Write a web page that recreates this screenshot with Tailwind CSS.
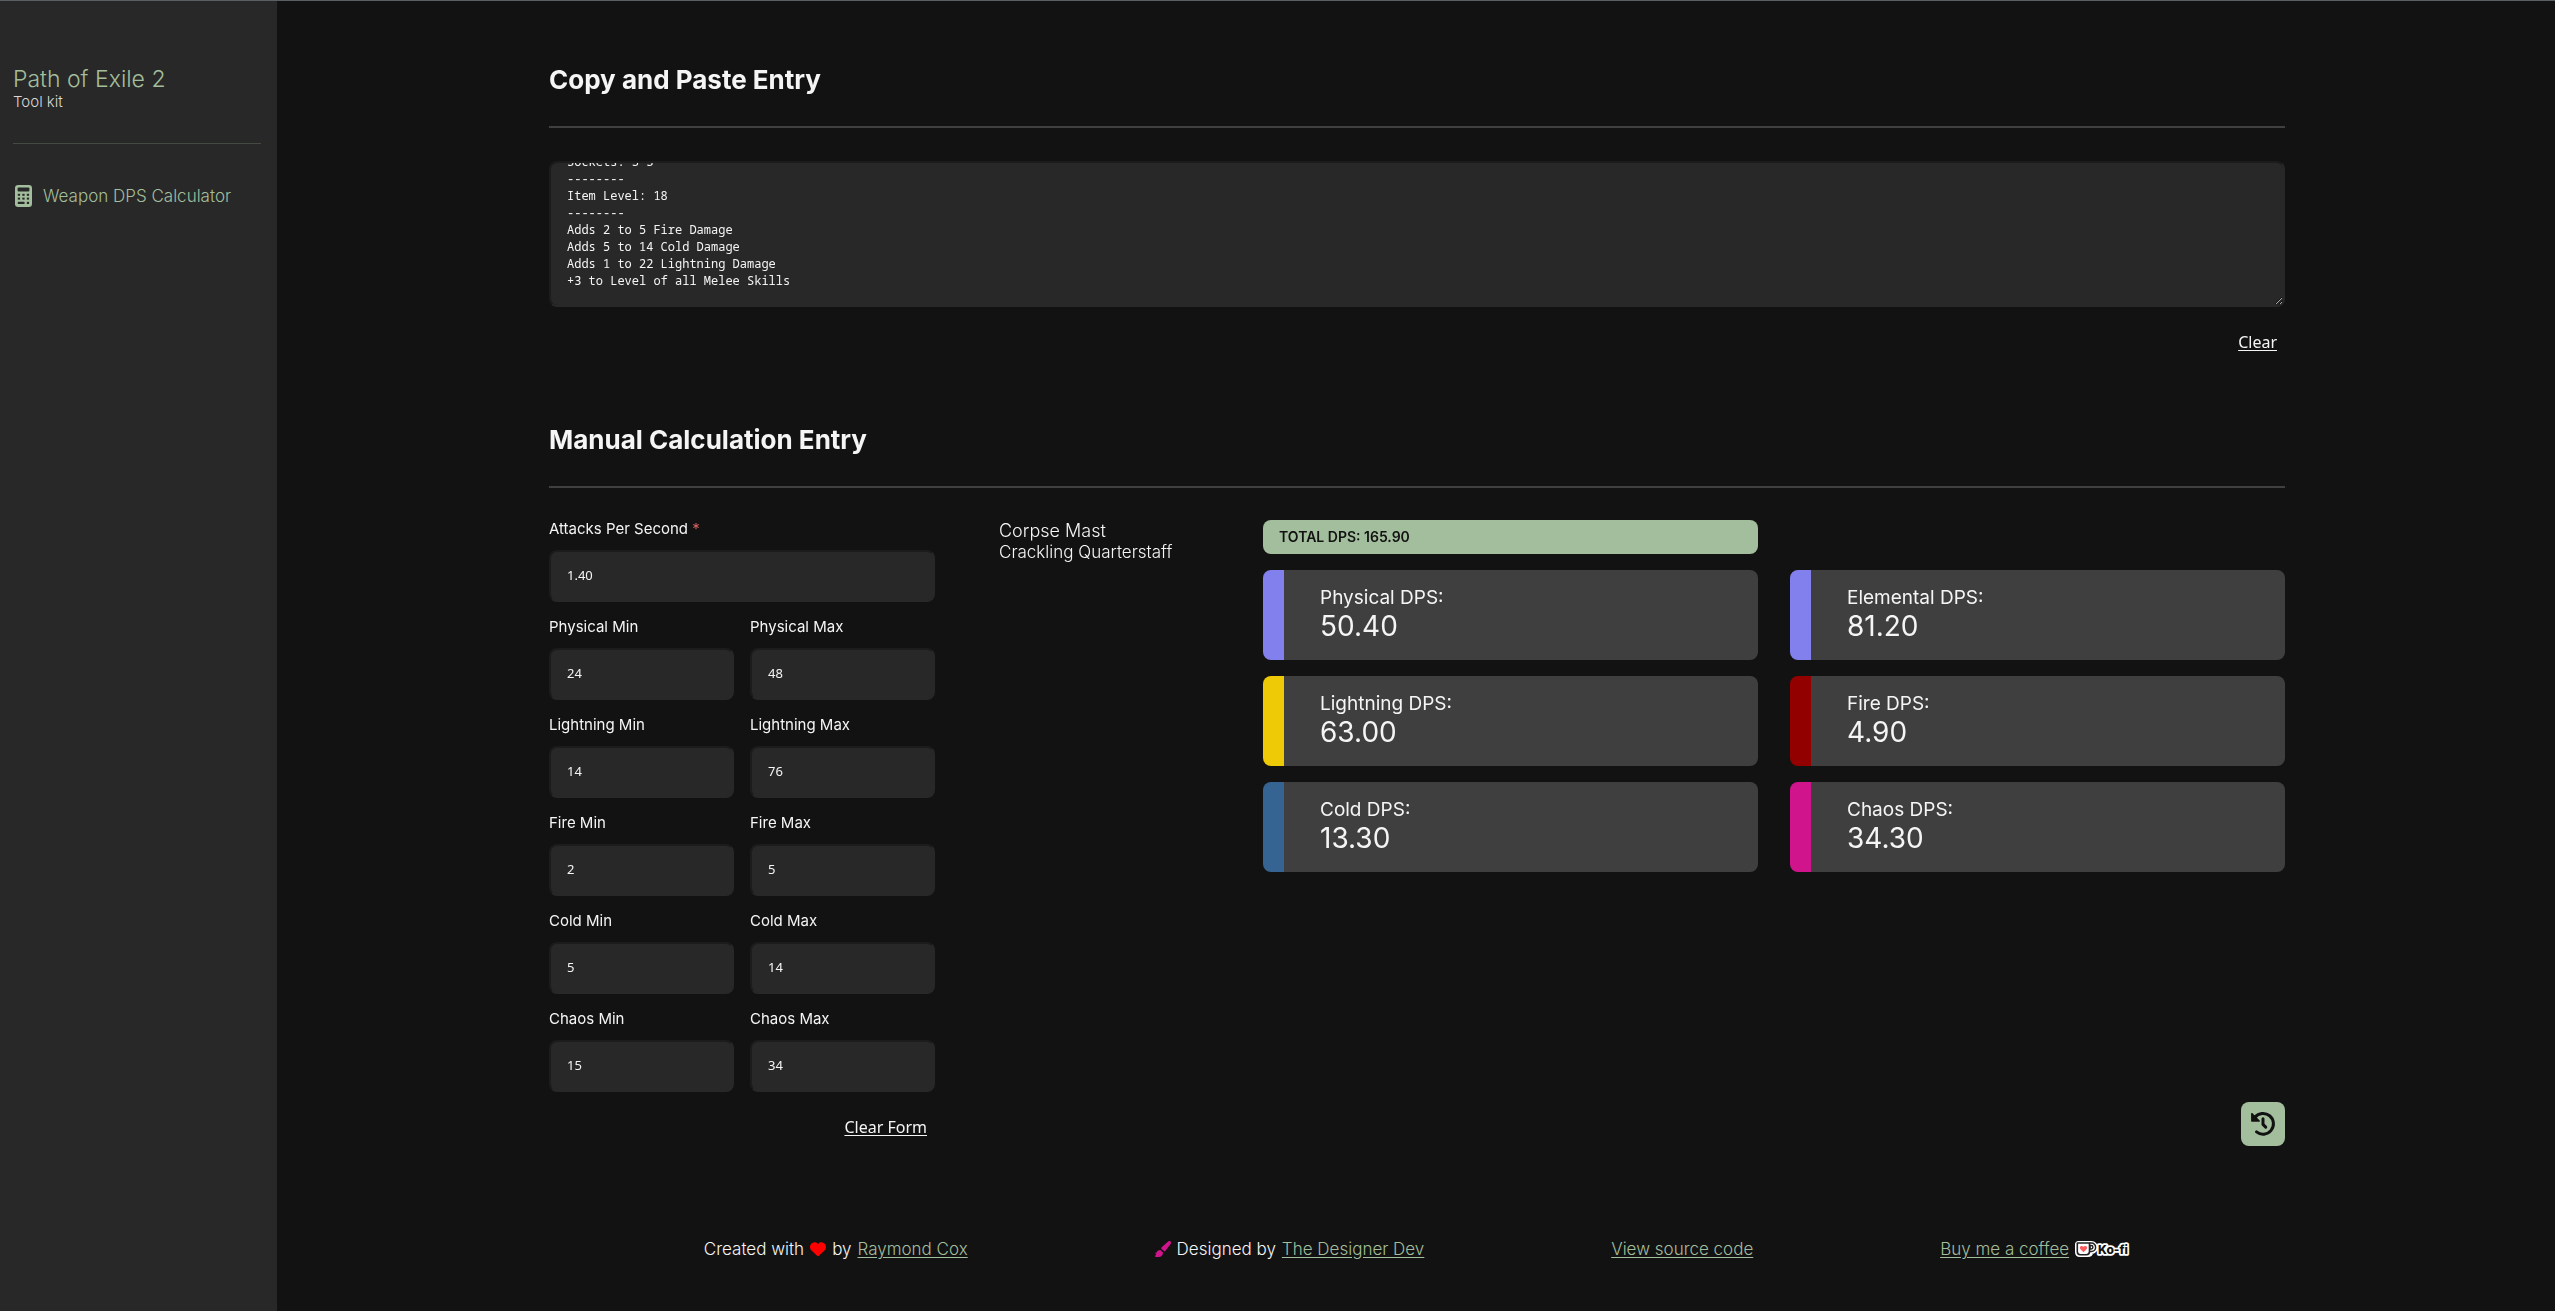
<!DOCTYPE html>
<html lang="en">
<head>
<meta charset="utf-8">
<meta name="viewport" content="width=device-width, initial-scale=1">
<title>Path of Exile 2 Tool kit</title>
<script src="https://cdn.jsdelivr.net/npm/@tailwindcss/browser@4"></script>
</head>
<body class="flex min-h-screen gap-0.5 border-t border-[#5a5f63] bg-[#121212] font-['Inter',sans-serif] text-[#f5f5f5]">

<aside class="w-[277px] shrink-0 bg-[#282828] px-[13px] pt-16 font-light">
  <a href="#" class="block text-[23px] leading-7 text-[#a3be9c]">Path of Exile 2</a>
  <p class="text-[15px] leading-[18px] text-[#d8d8d8]">Tool kit</p>
  <hr class="mt-8 mr-[3px] border-[#434b40]">
  <nav class="mt-10">
    <a href="#" class="flex items-center gap-[11px] text-[17px] leading-6 text-[#a3be9c]">
      <svg class="ml-0.5 h-[22px] w-[17px]" viewBox="0 0 17 22" aria-hidden="true">
        <rect width="17" height="22" rx="3.2" fill="#a3be9c"/>
        <g fill="#282828">
          <rect x="2.6" y="2.6" width="11.8" height="4" rx="1"/>
          <rect x="2.8" y="8.8" width="2.3" height="2"/><rect x="7.3" y="8.8" width="2.3" height="2"/><rect x="11.8" y="8.8" width="2.3" height="2"/>
          <rect x="2.8" y="12.6" width="2.3" height="2"/><rect x="7.3" y="12.6" width="2.3" height="2"/><rect x="11.8" y="12.6" width="2.3" height="2"/>
          <rect x="2.8" y="16.8" width="6.8" height="2.2" rx=".6"/><rect x="11.8" y="16.8" width="2.3" height="2.2"/>
        </g>
      </svg>
      Weapon DPS Calculator
    </a>
  </nav>
</aside>

<div class="mx-auto flex w-full max-w-[1800px] flex-col pt-[63px]">
<main class="px-8">
  <section>
    <h2 class="text-[26px] leading-8 font-bold"><label for="paste">Copy and Paste Entry</label></h2>
    <hr class="mt-[30px] border-t-2 border-[#404040]">
    <textarea id="paste" class="mt-[33px] block h-[146px] w-full rounded-lg border-2 border-t-[#1c1c1c] border-r-[#282828] border-b-[#282828] border-l-[#1c1c1c] bg-[#282828] p-4 font-['Noto_Sans_Mono','DejaVu_Sans_Mono',monospace] text-xs leading-[17px] [scrollbar-width:none]">Item Class: Quarterstaves
Rarity: Rare
Corpse Mast
Crackling Quarterstaff
--------
Sockets: S S
--------
Item Level: 18
--------
Adds 2 to 5 Fire Damage
Adds 5 to 14 Cold Damage
Adds 1 to 22 Lightning Damage
+3 to Level of all Melee Skills</textarea>
    <div class="mt-[23px] flex justify-end px-2">
      <button type="button" class="font-['Noto_Sans',sans-serif] leading-6 underline underline-offset-2">Clear</button>
    </div>
  </section>

  <section class="mt-[70px]">
    <h2 class="text-[26px] leading-8 font-bold">Manual Calculation Entry</h2>
    <hr class="mt-[30px] border-t-2 border-[#404040]">
    <div class="mt-8 flex">
      <form class="w-[386px] shrink-0">
        <div class="grid grid-cols-2 gap-4 text-[15px] leading-[18px]">
          <div class="col-span-2">
            <label for="aps">Attacks Per Second <span class="text-[#d9605f]">*</span></label>
            <input id="aps" value="1.40" class="mt-3 block h-[52px] w-full rounded-lg border-2 border-t-[#1c1c1c] border-r-[#282828] border-b-[#282828] border-l-[#1c1c1c] bg-[#282828] px-4 pb-0.5 font-['Noto_Sans',sans-serif] text-[13px]">
          </div>
          <div>
            <label for="pmin">Physical Min</label>
            <input id="pmin" value="24" class="mt-3 block h-[52px] w-full rounded-lg border-2 border-t-[#1c1c1c] border-r-[#282828] border-b-[#282828] border-l-[#1c1c1c] bg-[#282828] px-4 pb-0.5 font-['Noto_Sans',sans-serif] text-[13px]">
          </div>
          <div>
            <label for="pmax">Physical Max</label>
            <input id="pmax" value="48" class="mt-3 block h-[52px] w-full rounded-lg border-2 border-t-[#1c1c1c] border-r-[#282828] border-b-[#282828] border-l-[#1c1c1c] bg-[#282828] px-4 pb-0.5 font-['Noto_Sans',sans-serif] text-[13px]">
          </div>
          <div>
            <label for="lmin">Lightning Min</label>
            <input id="lmin" value="14" class="mt-3 block h-[52px] w-full rounded-lg border-2 border-t-[#1c1c1c] border-r-[#282828] border-b-[#282828] border-l-[#1c1c1c] bg-[#282828] px-4 pb-0.5 font-['Noto_Sans',sans-serif] text-[13px]">
          </div>
          <div>
            <label for="lmax">Lightning Max</label>
            <input id="lmax" value="76" class="mt-3 block h-[52px] w-full rounded-lg border-2 border-t-[#1c1c1c] border-r-[#282828] border-b-[#282828] border-l-[#1c1c1c] bg-[#282828] px-4 pb-0.5 font-['Noto_Sans',sans-serif] text-[13px]">
          </div>
          <div>
            <label for="fmin">Fire Min</label>
            <input id="fmin" value="2" class="mt-3 block h-[52px] w-full rounded-lg border-2 border-t-[#1c1c1c] border-r-[#282828] border-b-[#282828] border-l-[#1c1c1c] bg-[#282828] px-4 pb-0.5 font-['Noto_Sans',sans-serif] text-[13px]">
          </div>
          <div>
            <label for="fmax">Fire Max</label>
            <input id="fmax" value="5" class="mt-3 block h-[52px] w-full rounded-lg border-2 border-t-[#1c1c1c] border-r-[#282828] border-b-[#282828] border-l-[#1c1c1c] bg-[#282828] px-4 pb-0.5 font-['Noto_Sans',sans-serif] text-[13px]">
          </div>
          <div>
            <label for="cmin">Cold Min</label>
            <input id="cmin" value="5" class="mt-3 block h-[52px] w-full rounded-lg border-2 border-t-[#1c1c1c] border-r-[#282828] border-b-[#282828] border-l-[#1c1c1c] bg-[#282828] px-4 pb-0.5 font-['Noto_Sans',sans-serif] text-[13px]">
          </div>
          <div>
            <label for="cmax">Cold Max</label>
            <input id="cmax" value="14" class="mt-3 block h-[52px] w-full rounded-lg border-2 border-t-[#1c1c1c] border-r-[#282828] border-b-[#282828] border-l-[#1c1c1c] bg-[#282828] px-4 pb-0.5 font-['Noto_Sans',sans-serif] text-[13px]">
          </div>
          <div>
            <label for="hmin">Chaos Min</label>
            <input id="hmin" value="15" class="mt-3 block h-[52px] w-full rounded-lg border-2 border-t-[#1c1c1c] border-r-[#282828] border-b-[#282828] border-l-[#1c1c1c] bg-[#282828] px-4 pb-0.5 font-['Noto_Sans',sans-serif] text-[13px]">
          </div>
          <div>
            <label for="hmax">Chaos Max</label>
            <input id="hmax" value="34" class="mt-3 block h-[52px] w-full rounded-lg border-2 border-t-[#1c1c1c] border-r-[#282828] border-b-[#282828] border-l-[#1c1c1c] bg-[#282828] px-4 pb-0.5 font-['Noto_Sans',sans-serif] text-[13px]">
          </div>
        </div>
        <div class="mt-[23px] flex justify-end px-2 pb-[7px]">
          <button type="reset" class="font-['Noto_Sans',sans-serif] leading-6 underline underline-offset-2">Clear Form</button>
        </div>
      </form>

      <div class="ml-16 w-[264px] shrink-0 font-light">
        <p class="text-lg leading-[22px]">Corpse Mast</p>
        <p class="text-[17px] leading-5">Crackling Quarterstaff</p>
      </div>

      <div class="flex grow flex-col justify-between">
        <div class="grid grid-cols-2 gap-x-8 gap-y-4">
          <p class="col-start-1 rounded-lg bg-[#a3be9c] px-4 text-sm leading-[34px] font-semibold text-[#121212]">TOTAL DPS: 165.90</p>
          <div class="col-start-1 flex h-[90px] flex-col justify-center rounded-lg bg-gradient-to-r from-[#8280ec] from-[21px] to-[#3f3f3f] to-[21px] pb-0.5 pl-[57px] text-[19px] leading-6"><p>Physical DPS:</p><p class="text-[28px] leading-8">50.40</p></div>
          <div class="flex h-[90px] flex-col justify-center rounded-lg bg-gradient-to-r from-[#8280ec] from-[21px] to-[#3f3f3f] to-[21px] pb-0.5 pl-[57px] text-[19px] leading-6"><p>Elemental DPS:</p><p class="text-[28px] leading-8">81.20</p></div>
          <div class="flex h-[90px] flex-col justify-center rounded-lg bg-gradient-to-r from-[#eeca06] from-[21px] to-[#3f3f3f] to-[21px] pb-0.5 pl-[57px] text-[19px] leading-6"><p>Lightning DPS:</p><p class="text-[28px] leading-8">63.00</p></div>
          <div class="flex h-[90px] flex-col justify-center rounded-lg bg-gradient-to-r from-[#920000] from-[21px] to-[#3f3f3f] to-[21px] pb-0.5 pl-[57px] text-[19px] leading-6"><p>Fire DPS:</p><p class="text-[28px] leading-8">4.90</p></div>
          <div class="flex h-[90px] flex-col justify-center rounded-lg bg-gradient-to-r from-[#366492] from-[21px] to-[#3f3f3f] to-[21px] pb-0.5 pl-[57px] text-[19px] leading-6"><p>Cold DPS:</p><p class="text-[28px] leading-8">13.30</p></div>
          <div class="flex h-[90px] flex-col justify-center rounded-lg bg-gradient-to-r from-[#d0158c] from-[21px] to-[#3f3f3f] to-[21px] pb-0.5 pl-[57px] text-[19px] leading-6"><p>Chaos DPS:</p><p class="text-[28px] leading-8">34.30</p></div>
        </div>
        <button type="button" aria-label="History" class="size-11 self-end rounded-lg bg-[#a3be9c] text-[#121212]">
          <svg viewBox="0 0 44 44" fill="none" stroke="currentColor" stroke-width="3" stroke-linecap="round" stroke-linejoin="round" aria-hidden="true">
            <path d="M14 15.2a10.4 10.4 0 1 1 1.5 14.7"/>
            <path d="M22 16.8v5.6l2.7 2.7"/>
            <path d="M10.8 11.6l7.4 7.4h-7.4z" fill="currentColor" stroke-width="1.4"/>
          </svg>
        </button>
      </div>
    </div>
  </section>
</main>

<footer class="mt-[91px] flex justify-evenly pb-8 text-[17px] leading-6 font-light">
  <p class="flex items-center gap-1.5">Created with
    <svg class="size-4" viewBox="0 0 512 512" fill="#ff0000" role="img" aria-label="love"><path d="M47.6 300.4L228.3 469.1c7.5 7 17.4 10.9 27.7 10.9s20.2-3.9 27.7-10.9L464.4 300.4c30.4-28.3 47.6-68 47.6-109.5v-5.8c0-69.9-50.5-129.5-119.4-141C347 36.5 300.6 51.4 268 84L256 96 244 84c-32.6-32.6-79-47.5-124.6-39.9C50.5 55.6 0 115.2 0 185.1v5.8c0 41.5 17.2 81.2 47.6 109.5z"/></svg>
    by <a href="#" class="text-[#a3be9c] underline underline-offset-2">Raymond Cox</a></p>
  <p class="flex items-center gap-1.5">
    <svg class="size-4" viewBox="0 0 16 16" fill="#d0158c" aria-hidden="true"><path d="M15.5.5c.7.7.6 1.700.1 2.400L10.900 9.300c-.4.5-.9.900-1.500 1.200L6.100 7.400c.2-.6.600-1.100 1.100-1.600L13.200.500c.7-.6 1.700-.6 2.300 0z"/><path d="M5.300 8.900L8 11.600C8.100 14.200 6.200 16 3.800 16H.9c-.9 0-1.200-1-.5-1.500.9-.6.600-1.500.8-2.400.4-1.900 2.100-3.300 4.100-3.200z"/><path d="M0 11.800h1.500v1.800z"/></svg>
    Designed by <a href="#" class="text-[#a3be9c] underline underline-offset-2">The Designer Dev</a></p>
  <a href="#" class="text-[#a3be9c] underline underline-offset-2">View source code</a>
  <p class="flex items-center gap-[5px]"><a href="#" class="text-[#a3be9c] underline underline-offset-2">Buy me a coffee</a>
    <svg class="h-[18px] w-14" viewBox="0 0 56 18" role="img" aria-label="Ko-fi">
      <g stroke="#fff" stroke-width="4" fill="#fff" stroke-linejoin="round"><path d="M4 3h13.500a4.500 4.500 0 0 1 0 9c-.5 2-2 3-3.500 3H6c-2 0-3-1.200-3-3V4z"/></g>
      <path d="M3.500 3h12v8.500c0 2-1.200 3.200-3.200 3.200H6.200c-1.900 0-2.900-1-2.900-2.900V3.300z" fill="#fff" stroke="#222" stroke-width="1.600"/>
      <path d="M15.500 3h1.900a4.200 4.200 0 0 1 0 8.500h-1.900M16 5.600h1.200a1.700 1.700 0 0 1 0 3.400H16z" fill="none" stroke="#222" stroke-width="1.500"/>
      <path d="M9.500 12.300L6.300 9c-1.500-1.800.9-4.500 3.200-2.300 2.300-2.200 4.700.5 3.200 2.300z" fill="#ff5a5f"/>
      <text x="24" y="13.500" class="font-['Inter',sans-serif] text-[12px] font-extrabold" fill="#111" stroke="#fff" stroke-width="3.500" stroke-linejoin="round" paint-order="stroke">Ko-fi</text>
    </svg>
  </p>
</footer>
</div>

<script>
  // Keep the end of the pasted item text in view.
  const paste = document.getElementById('paste');
  paste.scrollTop = paste.scrollHeight;
</script>
</body>
</html>
